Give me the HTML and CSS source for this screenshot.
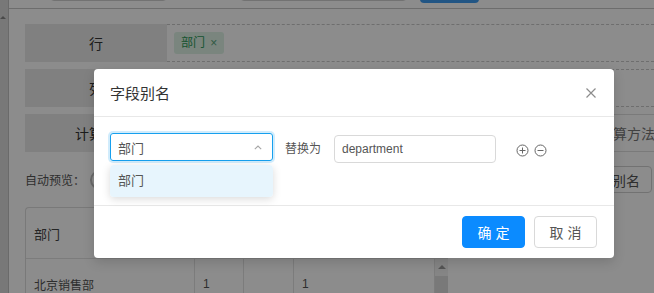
FILE: index.html
```html
<!DOCTYPE html>
<html lang="zh-CN">
<head>
<meta charset="utf-8">
<title>字段别名</title>
<link rel="stylesheet" href="styles.css">
</head>
<body>
<div class="page">
  <aside class="side"><span class="side-arrow"></span></aside>
  <main class="main">
    <div class="toolbar">
      <div class="tb-input tb-input-1"></div>
      <div class="tb-input tb-input-2"></div>
      <div class="tb-btn"></div>
    </div>
    <div class="content">
      <div class="shelf">
        <div class="shelf-row">
          <div class="shelf-label">行</div>
          <div class="shelf-zone"><span class="tag">部门 <span class="tag-x">×</span></span></div>
        </div>
        <div class="shelf-row">
          <div class="shelf-label">列</div>
          <div class="shelf-zone"></div>
        </div>
        <div class="shelf-row">
          <div class="shelf-label">计算列</div>
          <div class="shelf-zone shelf-zone-solid"><span class="calc-text">计算方法</span></div>
        </div>
      </div>
      <div class="preview">
        <span class="preview-label">自动预览：</span>
        <span class="switch"><span class="switch-knob"></span></span>
        <button class="alias-btn">字段别名</button>
      </div>
      <div class="grid-table">
        <div class="t-row t-head">
          <div class="t-cell">部门</div>
          <div class="t-cell"></div>
          <div class="t-cell"></div>
          <div class="t-cell"></div>
          <div class="t-cell t-scroll-head"></div>
        </div>
        <div class="t-row t-body">
          <div class="t-cell">北京销售部</div>
          <div class="t-cell">1</div>
          <div class="t-cell"></div>
          <div class="t-cell">1</div>
          <div class="t-scroll"><span class="t-scroll-up"></span><span class="t-scroll-thumb"></span></div>
        </div>
      </div>
    </div>
  </main>

  <div class="mask"></div>

  <div class="modal" role="dialog">
    <div class="modal-header">
      <span class="modal-title">字段别名</span>
      <svg class="modal-close" width="10" height="10" viewBox="0 0 10 10"><path d="M0.5 0.5 L9.5 9.5 M9.5 0.5 L0.5 9.5" stroke="#8c8c8c" stroke-width="1.2" fill="none"/></svg>
    </div>
    <div class="modal-body">
      <div class="field-row">
        <div class="select">
          <span class="select-value">部门</span>
          <svg class="select-arrow" width="8" height="5" viewBox="0 0 8 5"><path d="M0.8 4.2 L4 1 L7.2 4.2" stroke="#a6a6a6" stroke-width="1.1" fill="none"/></svg>
          <div class="dropdown">
            <div class="dropdown-item">部门</div>
          </div>
        </div>
        <span class="replace-label">替换为</span>
        <div class="text-input">department</div>
        <svg class="op-icon op-plus" width="13" height="13" viewBox="0 0 13 13"><circle cx="6.5" cy="6.5" r="5.5" stroke="#666" stroke-width="1" fill="none"/><path d="M6.5 3.5 V9.5 M3.5 6.5 H9.5" stroke="#666" stroke-width="1" fill="none"/></svg>
        <svg class="op-icon op-minus" width="13" height="13" viewBox="0 0 13 13"><circle cx="6.5" cy="6.5" r="5.5" stroke="#666" stroke-width="1" fill="none"/><path d="M3.5 6.5 H9.5" stroke="#666" stroke-width="1" fill="none"/></svg>
      </div>
    </div>
    <div class="modal-footer">
      <button class="btn btn-primary">确定</button>
      <button class="btn btn-default">取消</button>
    </div>
  </div>
</div>
</body>
</html>
```

FILE: styles.css
```css
* { box-sizing: border-box; }
html, body { margin: 0; padding: 0; }
body {
  width: 654px;
  height: 293px;
  overflow: hidden;
  background: #fff;
  font-family: "Liberation Sans", "Noto Sans CJK SC", sans-serif;
  font-size: 12px;
  color: #555;
}
button { font-family: inherit; cursor: pointer; }

.page {
  position: relative;
  display: flex;
  width: 654px;
  height: 293px;
  overflow: hidden;
  background: #fff;
}

/* left strip */
.side {
  width: 9px;
  flex: none;
  background: #dadada;
  border-right: 1px solid #c2c2c2;
  display: flex;
  flex-direction: column;
  padding-top: 16px;
}
.side-arrow {
  width: 0;
  height: 0;
  border-left: 3px solid transparent;
  border-right: 3px solid transparent;
  border-bottom: 3px solid #888;
  margin-left: 0;
}

.main {
  flex: 1;
  min-width: 0;
  display: flex;
  flex-direction: column;
}

/* top toolbar (mostly scrolled off) */
.toolbar {
  height: 9px;
  flex: none;
  border-bottom: 1px solid #c6c6c6;
  display: flex;
  align-items: flex-start;
}
.tb-input {
  height: 30px;
  margin-top: -29px;
  border: 1px solid #cfcfcf;
  border-radius: 4px;
  background: #fff;
}
.tb-input-1 { margin-left: 41px; width: 117px; }
.tb-input-2 { margin-left: 73px; width: 167px; }
.tb-btn {
  margin-left: 13px;
  width: 59px;
  height: 32px;
  margin-top: -29px;
  border-radius: 4px;
  background: #3d9cf0;
}

.content {
  padding: 15px 0 0 16px;
  display: flex;
  flex-direction: column;
}

/* shelves */
.shelf {
  display: flex;
  flex-direction: column;
  gap: 7px;
}
.shelf-row {
  display: flex;
  height: 38px;
}
.shelf-label {
  width: 142px;
  flex: none;
  background: #e9e9e9;
  display: flex;
  align-items: center;
  justify-content: center;
  font-size: 14px;
  color: #333;
}
.shelf-zone {
  flex: 1;
  border-top: 1px dashed #c8c8c8;
  border-bottom: 1px dashed #c8c8c8;
  display: flex;
  align-items: center;
  padding-left: 7px;
}
.shelf-zone-solid {
  border-top: 1px solid #dedede;
  border-bottom: 1px solid #dedede;
}
.tag {
  height: 22px;
  padding: 0 7px;
  border-radius: 3px;
  background: #def3e6;
  color: #2f9a5a;
  font-size: 12px;
  line-height: 22px;
}
.tag-x { color: #5aa57a; margin-left: 2px; }
.calc-text {
  margin-left: 425px;
  font-size: 14px;
  color: #777;
  white-space: nowrap;
}

/* preview bar */
.preview {
  display: flex;
  align-items: center;
  height: 27px;
  margin-top: 14px;
}
.preview-label { color: #555; }
.switch {
  width: 40px;
  height: 20px;
  margin-left: 5px;
  border-radius: 10px;
  background: #bfbfbf;
  display: flex;
  align-items: center;
  padding-left: 2px;
}
.switch-knob {
  width: 16px;
  height: 16px;
  border-radius: 50%;
  background: #fff;
}
.alias-btn {
  margin-left: auto;
  margin-right: 2px;
  height: 27px;
  padding: 0 11px;
  border: 1px solid #d0d0d0;
  border-radius: 4px;
  background: #fff;
  color: #555;
  font-size: 14px;
}

/* table */
.grid-table {
  margin-top: 14px;
  width: 423px;
  border-top: 1px solid #dcdcdc;
  border-left: 1px solid #dcdcdc;
  border-top-left-radius: 4px;
}
.t-row {
  display: grid;
  grid-template-columns: 169px 49px 50px 141px 13px;
}
.t-head {
  height: 51px;
  border-bottom: 1px solid #e2e2e2;
}
.t-body { height: 50px; }
.t-cell {
  border-right: 1px solid #e2e2e2;
  padding: 0 8px;
  display: flex;
  align-items: center;
  color: #555;
  font-size: 12px;
}
.t-head .t-cell { font-size: 13px; color: #444; }
.t-scroll-head { border-right: none; }
.t-scroll {
  background: #f3f3f3;
  display: flex;
  flex-direction: column;
  align-items: center;
  padding-top: 6px;
}
.t-scroll-up {
  width: 0;
  height: 0;
  border-left: 4px solid transparent;
  border-right: 4px solid transparent;
  border-bottom: 4px solid #9a9a9a;
}
.t-scroll-thumb {
  margin-top: 7px;
  width: 13px;
  flex: 1;
  background: #dcdcdc;
}

/* mask + modal */
.mask {
  position: absolute;
  inset: 0;
  background: rgba(0, 0, 0, 0.45);
}
.modal {
  position: absolute;
  left: 94px;
  top: 69px;
  width: 520px;
  background: #fff;
  border-radius: 4px;
  box-shadow: 0 4px 12px rgba(0, 0, 0, 0.15);
}
.modal-header {
  height: 48px;
  padding: 0 18px 0 16px;
  display: flex;
  align-items: center;
  justify-content: space-between;
  border-bottom: 1px solid #e8e8e8;
}
.modal-title {
  font-size: 15px;
  color: #333;
}
.modal-close { display: block; }

.modal-body {
  height: 88px;
  padding: 16px 16px 0;
}
.field-row {
  display: flex;
  align-items: flex-start;
}
.select {
  position: relative;
  width: 163px;
  height: 28px;
  border: 1px solid #17a0ee;
  border-radius: 3px;
  box-shadow: 0 0 0 2px rgba(24, 160, 238, 0.2);
  padding-left: 7px;
  display: flex;
  align-items: center;
}
.select-value {
  font-size: 13px;
  color: #555;
}
.select-arrow {
  margin-left: auto;
  margin-right: 10px;
  display: block;
}
.dropdown {
  position: absolute;
  top: 31px;
  left: -1px;
  width: 163px;
  background: #fff;
  border-radius: 4px;
  box-shadow: 0 2px 8px rgba(0, 0, 0, 0.15);
  overflow: hidden;
}
.dropdown-item {
  height: 32px;
  line-height: 32px;
  padding-left: 8px;
  background: #e7f5fd;
  font-size: 13px;
  color: #555;
}
.replace-label {
  margin-left: 12px;
  margin-top: 2px;
  line-height: 28px;
  font-size: 12px;
  color: #555;
}
.text-input {
  margin-left: 13px;
  margin-top: 2px;
  width: 162px;
  height: 28px;
  border: 1px solid #d9d9d9;
  border-radius: 4px;
  padding-left: 7px;
  line-height: 26px;
  font-size: 12px;
  color: #555;
}
.op-icon {
  display: block;
  margin-top: 11px;
}
.op-plus { margin-left: 20px; }
.op-minus { margin-left: 5px; }

.modal-footer {
  border-top: 1px solid #e8e8e8;
  padding: 10px 17px 10px;
  display: flex;
  justify-content: flex-end;
  gap: 9px;
}
.btn {
  width: 63px;
  height: 32px;
  border-radius: 4px;
  font-size: 14px;
  letter-spacing: 4px;
  padding: 0 0 0 4px;
}
.btn-primary {
  border: 1px solid #0b8bff;
  background: #0b8bff;
  color: #fff;
}
.btn-default {
  border: 1px solid #d9d9d9;
  background: #fff;
  color: #555;
}
```
